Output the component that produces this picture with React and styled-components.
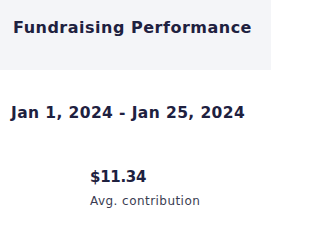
import React from 'react'
import styled, { createGlobalStyle } from 'styled-components'

const GlobalStyle = createGlobalStyle`
  html, body { margin: 0; padding: 0; background: #fff; }
  body { font-family: "DejaVu Sans", Inter, sans-serif; }
`

const Card = styled.div`
  width: 271px;
  height: 220px;
  display: flex;
  flex-direction: column;
  background: #fff;
  color: #1e2140;
`

const Header = styled.div`
  height: 70px;
  display: flex;
  align-items: flex-start;
  padding: 17px 0 0 13px;
  box-sizing: border-box;
  background: #f4f5f8;
`

const Title = styled.h2`
  margin: 0;
  font-size: 16px;
  font-weight: 700;
  line-height: 22px;
  letter-spacing: 0.5px;
`

const Body = styled.div`
  display: flex;
  flex-direction: column;
  padding: 32px 0 0 11px;
`

const Range = styled.div`
  font-size: 15.5px;
  font-weight: 700;
  line-height: 22px;
  letter-spacing: 0.4px;
`

const Stat = styled.div`
  display: flex;
  flex-direction: column;
  gap: 6px;
  margin: 43px 0 0 79px;
`

const Value = styled.div`
  font-size: 15px;
  font-weight: 700;
  line-height: 20px;
  letter-spacing: -0.3px;
`

const Label = styled.div`
  font-size: 12px;
  line-height: 16px;
  letter-spacing: 0.45px;
  color: #3a3d52;
`

const App = () => {
  return (
    <Card>
      <GlobalStyle />
      <Header>
        <Title>Fundraising Performance</Title>
      </Header>
      <Body>
        <Range>Jan 1, 2024 - Jan 25, 2024</Range>
        <Stat>
          <Value>$11.34</Value>
          <Label>Avg. contribution</Label>
        </Stat>
      </Body>
    </Card>
  )
}

export default App
